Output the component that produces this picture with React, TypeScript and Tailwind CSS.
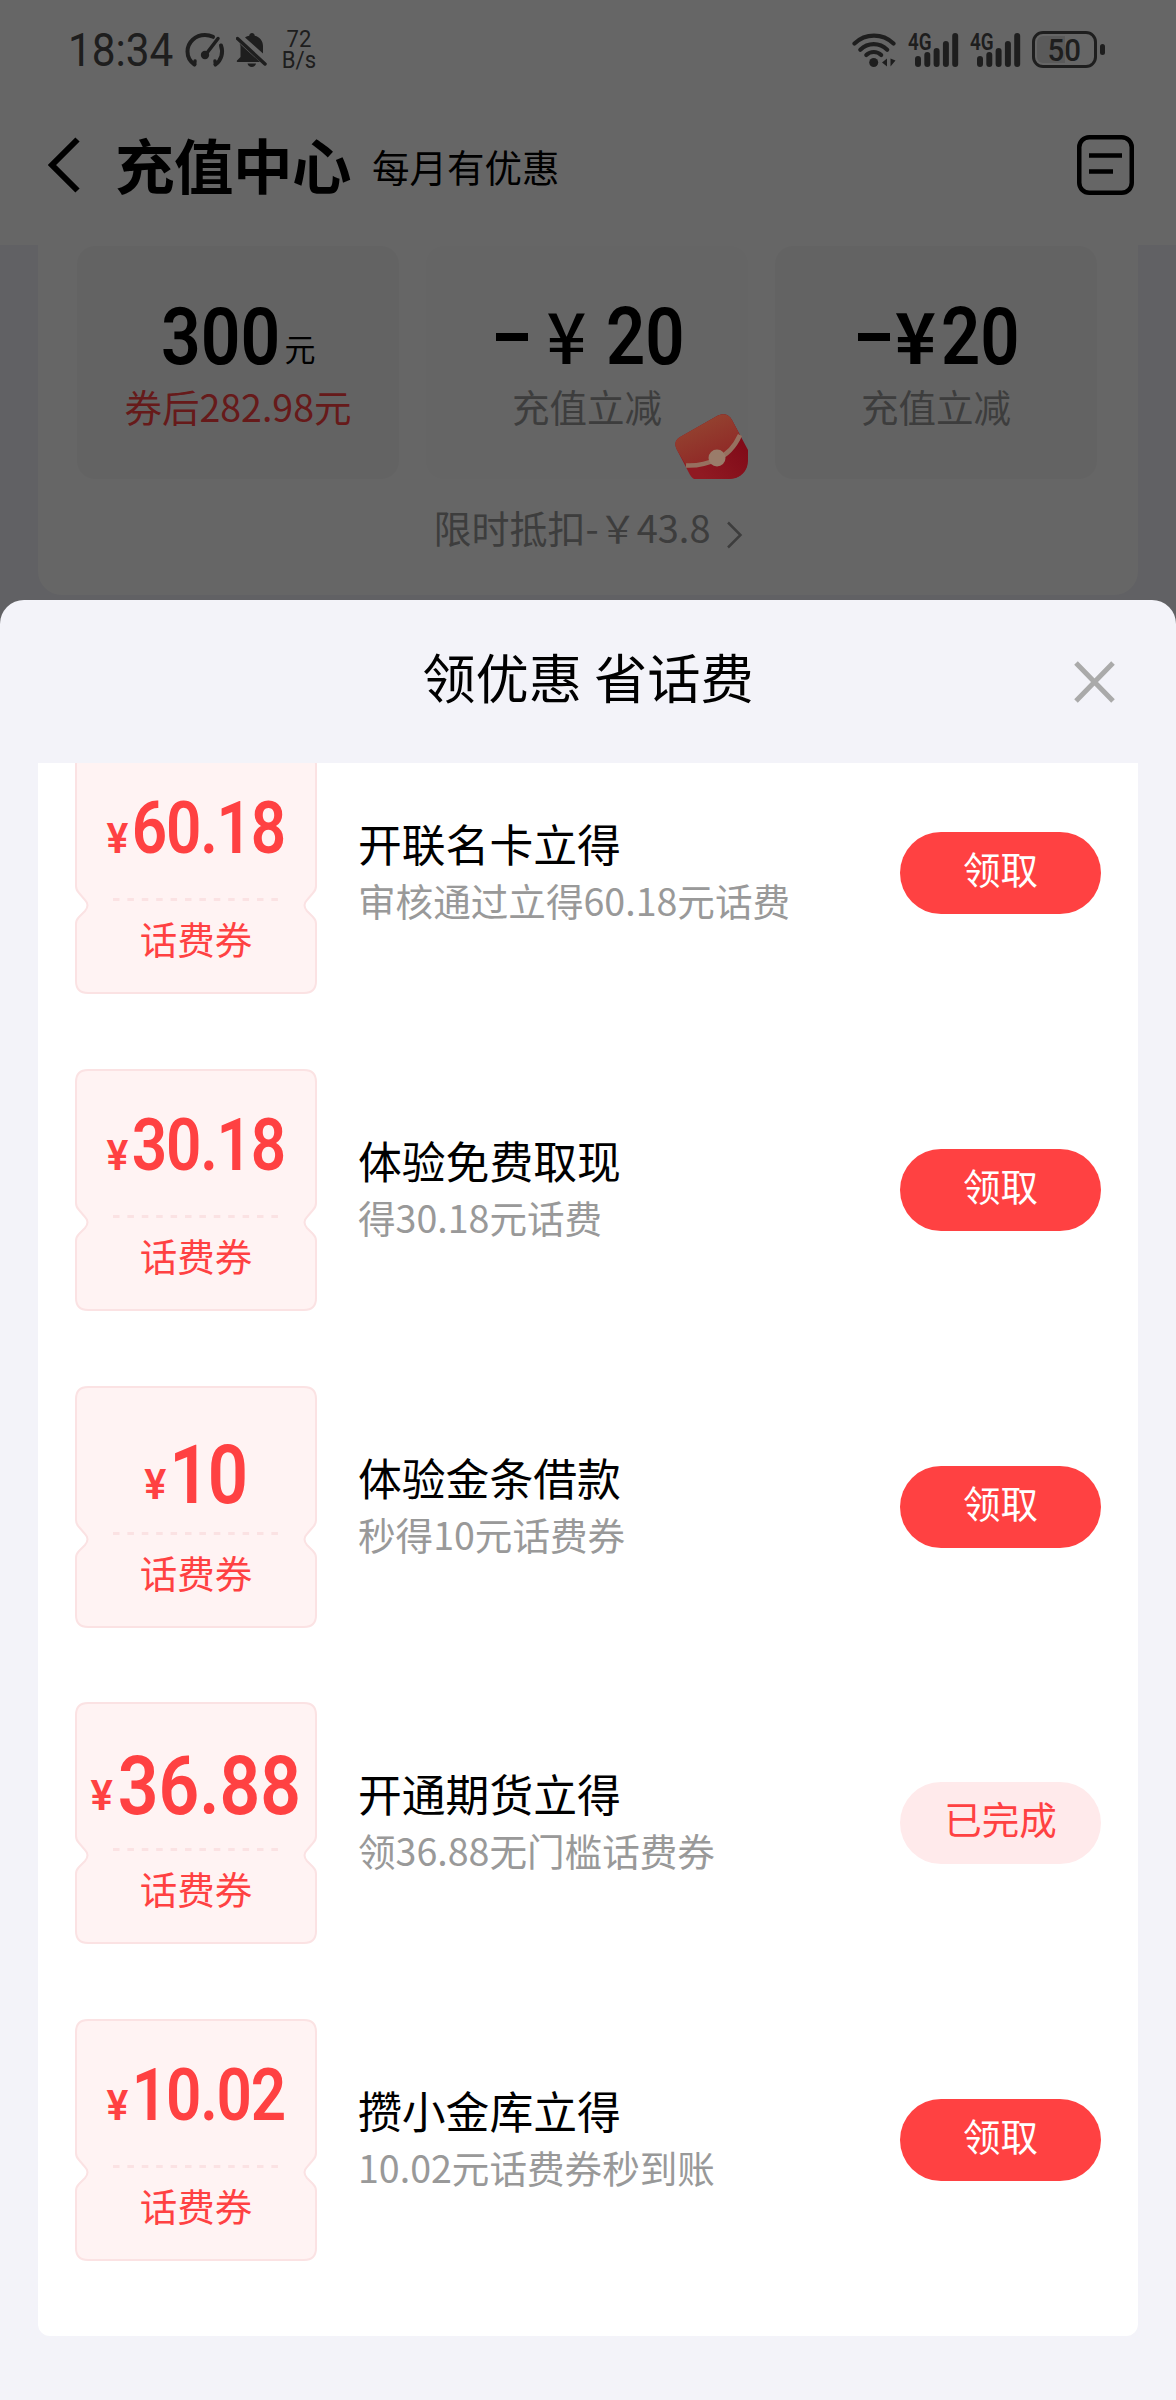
import { clsx } from 'clsx';

const coupons = [
  { amount: '60.18', size: 'md', title: '开联名卡立得', desc: '审核通过立得60.18元话费', done: false },
  { amount: '30.18', size: 'md', title: '体验免费取现', desc: '得30.18元话费', done: false },
  { amount: '10', size: 'lg', title: '体验金条借款', desc: '秒得10元话费券', done: false },
  { amount: '36.88', size: 'xl', title: '开通期货立得', desc: '领36.88无门槛话费券', done: true },
  { amount: '10.02', size: 'md', title: '攒小金库立得', desc: '10.02元话费券秒到账', done: false },
];

const amountStyles: Record<string, string> = {
  md: 'scale-x-[0.85] pt-[40px] text-[73px] leading-[73px] tracking-[-1.5px]',
  lg: 'scale-x-[0.86] pt-[48px] text-[82px] leading-[82px] tracking-[-2px]',
  xl: 'scale-x-[0.87] pt-[43px] text-[82px] leading-[82px]',
};

function SpeedIcon() {
  return (
    <svg width="40" height="36" viewBox="0 0 40 36" fill="none" stroke="currentColor" strokeLinecap="round">
      <path d="M9.5 32.5C5 29.500 2.500 24.500 2.500 19.500C2.500 10 10.500 3 20 3C23 3 25.500 3.600 28 4.800" strokeWidth="4" />
      <path d="M36 13.500C38.500 20.500 36.500 28 30.500 32.500" strokeWidth="4" />
      <path d="M9.500 32.500L10 29M30.500 32.500L30 29" strokeWidth="3.500" />
      <path d="M20 23.500L33 6.500" strokeWidth="3.500" />
      <circle cx="20" cy="23" r="4.200" fill="currentColor" stroke="none" />
    </svg>
  );
}

function BellOffIcon() {
  return (
    <svg width="31" height="34" viewBox="0 0 31 34" fill="currentColor">
      <path d="M3.500 10.500L24 29H1.500C.5 29 .5 27.500 1.500 27L4.500 24V13Z" />
      <path d="M9 4.500C10.500 3.400 12 2.900 13.200 2.700C13.500 1 14.500 0 16 0S18.500 1 18.800 2.700C24 4 27 8 27 13V20.500Z" />
      <path d="M11.500 30.500H20C19.500 32.500 18 34 15.800 34S12 32.500 11.500 30.500Z" />
      <path d="M1.500 5.500L29 31" stroke="currentColor" strokeWidth="3.500" strokeLinecap="round" />
    </svg>
  );
}

function WifiIcon() {
  return (
    <svg width="44" height="34" viewBox="0 0 44 34" fill="none" stroke="currentColor" strokeWidth="4.200" strokeLinecap="round">
      <path d="M2.500 10.500C13.500 0 30.500 0 41.500 10.500" />
      <path d="M8.300 16.700C16 9.300 27.500 9.300 35.200 16.700" />
      <path d="M14.300 22C18.500 18 25 18 29.200 22" />
      <circle cx="21.700" cy="29.500" r="4.500" fill="currentColor" stroke="none" />
      <path d="M35 25.500V33.500L30 29.500ZM38.500 25.500V33.500L43.500 27.500Z" fill="currentColor" stroke="none" />
    </svg>
  );
}

function SignalIcon() {
  return (
    <div className="relative h-[34px] w-[51px]">
      <span className="absolute top-[-2px] left-0 origin-left scale-x-[0.82] font-[Roboto] text-[23px] leading-[23px] font-semibold">
        4G
      </span>
      <svg className="absolute top-0 left-[7px]" width="44" height="34" viewBox="0 0 44 34" fill="currentColor">
        <rect x="0" y="23" width="6" height="11" rx="3" />
        <rect x="9.300" y="19" width="6" height="15" rx="3" />
        <rect x="18.600" y="15" width="6" height="19" rx="3" />
        <rect x="27.900" y="8" width="6" height="26" rx="3" />
        <rect x="37.200" y="0" width="6" height="34" rx="3" />
      </svg>
    </div>
  );
}

function RedPacket() {
  return (
    <svg className="absolute right-0 bottom-0 z-20" width="73" height="65" viewBox="0 0 73 65" fill="none">
      <defs>
        <linearGradient id="packetTop" x1="30" y1="8" x2="45" y2="42" gradientUnits="userSpaceOnUse">
          <stop stopColor="#93402f" />
          <stop offset="1" stopColor="#902a27" />
        </linearGradient>
        <linearGradient id="packetBottom" x1="30" y1="65" x2="72" y2="30" gradientUnits="userSpaceOnUse">
          <stop stopColor="#901a22" />
          <stop offset="1" stopColor="#800a18" />
        </linearGradient>
      </defs>
      <path
        d="M2 36C-1 30 0 26 5 23L42 2C48 -1 54 0 57 6L73 36V50C72 58 66 64 57 65H19C17 64 15 61 14 59Z"
        fill="url(#packetBottom)"
      />
      <path d="M2 36C-1 30 0 26 5 23L42 2C48 -1 54 0 57 6L65 21C60 33 52 41 42 45C32 50 22 52 11 51Z" fill="url(#packetTop)" />
      <path d="M11 51.500C22 52 32 50 42 45C52 41 60 32 65 21" stroke="#96705f" strokeWidth="4.500" />
      <circle cx="42" cy="44" r="8.500" fill="#9a7c6a" />
    </svg>
  );
}

function StatusBar() {
  return (
    <div className="flex h-[99px] items-center justify-between pr-[71px] pl-[68px] text-[#4d4d4d]">
      <div className="flex items-center">
        <span className="w-[117px] origin-left scale-x-[0.92] font-[Roboto] text-[46px] leading-none">18:34</span>
        <SpeedIcon />
        <span className="w-[11px]" />
        <BellOffIcon />
        <p className="ml-[13px] w-[38px] scale-x-[0.92] text-center font-[Roboto] text-[24px] leading-[21px]">
          72
          <br />
          B/s
        </p>
      </div>
      <div className="flex items-center">
        <WifiIcon />
        <span className="w-[12px]" />
        <SignalIcon />
        <span className="w-[11px]" />
        <SignalIcon />
        <div className="relative ml-[11px] flex h-[37px] w-[65px] items-center justify-center rounded-[11px] border-3 border-current">
          <span className="absolute top-[2px] bottom-[2px] left-[2px] w-[28px] rounded-l-[6px] bg-black/12" />
          <span className="relative scale-x-[0.92] font-[Roboto] text-[32px] leading-none font-medium">50</span>
        </div>
        <span className="ml-[3px] h-[11px] w-[5px] rounded-full bg-current" />
      </div>
    </div>
  );
}

function Header() {
  return (
    <header className="flex h-[131px] items-center pr-[42px] pl-[48px]">
      <svg width="32" height="56" viewBox="0 0 32 56" fill="none" stroke="black" strokeWidth="6">
        <path d="M29.500 2.500L4 28L29.500 53.500" />
      </svg>
      <h1 className="mb-[2px] ml-[35px] text-[59.500px] leading-none font-bold tracking-[-0.5px]">充值中心</h1>
      <p className="mt-[2px] ml-[21px] text-[37.500px] leading-none">每月有优惠</p>
      <svg className="ml-auto" width="57" height="60" viewBox="0 0 57 60" fill="none" stroke="black" strokeWidth="4.500">
        <rect x="2.250" y="2.250" width="52.500" height="55.500" rx="10" />
        <path d="M12 20.500H45M12 36.500H36" />
      </svg>
    </header>
  );
}

function Plans() {
  return (
    <section className="mx-[38px] h-[350px] rounded-b-[24px] bg-white px-[39px] pt-px">
      <div className="flex gap-[27px]">
        <div className="flex h-[233px] w-[322px] flex-col items-center rounded-[18px] bg-[#f8f8f8] pt-[51px]">
          <div className="flex h-[79px] items-baseline">
            <span className="w-[121px] origin-left scale-x-[0.87] font-[Roboto] text-[80px] leading-[80px] font-semibold">300</span>
            <span className="ml-[3px] -translate-y-[3px] text-[31px] leading-none">元</span>
          </div>
          <p className="text-[37.500px] leading-[60px] text-[#ff4142]">券后282.98元</p>
        </div>
        <div className="relative flex h-[233px] w-[322px] flex-col items-center overflow-hidden rounded-[18px] bg-[#fcfcfc] pt-[51px]">
          <div className="flex h-[79px] items-center">
            <span className="h-[8px] w-[32px] bg-black" />
            <span className="w-[78px] pb-[6px] text-center text-[70px] leading-[76px] font-medium">¥</span>
            <span className="w-[73px] origin-left scale-x-[0.86] font-[Roboto] text-[80px] leading-[80px] font-semibold">20</span>
          </div>
          <p className="text-[37.500px] leading-[60px] text-[#999]">充值立减</p>
          <RedPacket />
        </div>
        <div className="flex h-[233px] w-[322px] flex-col items-center rounded-[18px] bg-[#f8f8f8] pt-[51px]">
          <div className="flex h-[79px] items-center">
            <span className="h-[8px] w-[32px] bg-black" />
            <span className="w-[51px] pb-[6px] text-center text-[70px] leading-[76px] font-bold">¥</span>
            <span className="w-[73px] origin-left scale-x-[0.86] font-[Roboto] text-[80px] leading-[80px] font-semibold">20</span>
          </div>
          <p className="text-[37.500px] leading-[60px] text-[#999]">充值立减</p>
        </div>
      </div>
      <div className="mt-[18px] flex items-center justify-center text-[38px] leading-[60px] text-[#999]">
        <span>限时抵扣-￥43.8</span>
        <svg className="mt-[16px] ml-[15px]" width="17" height="28" viewBox="0 0 17 28" fill="none" stroke="currentColor" strokeWidth="2.500">
          <path d="M2 1.500L14.500 14L2 26.500" />
        </svg>
      </div>
    </section>
  );
}

function Ticket({ amount, size }: { amount: string; size: string }) {
  return (
    <div className="relative h-[242px] w-[242px] shrink-0 text-[#ff4142]">
      <svg className="absolute inset-0" width="242" height="242" viewBox="0 0 242 242" fill="none">
        <path
          d="M13 1H229Q241 1 241 13V134Q241 138 238 141L232 148Q227 153 232 159L238 165Q241 168 241 172V229Q241 241 229 241H13Q1 241 1 229V172Q1 168 4 165L10 159Q15 153 10 148L4 141Q1 138 1 134V13Q1 1 13 1Z"
          fill="#fff3f3"
          stroke="#fbe2e3"
          strokeWidth="2"
        />
        <path d="M38 147.500H204" stroke="#fbe2e3" strokeWidth="3" strokeDasharray="6.500 7.900" />
      </svg>
      <div className="relative flex h-full flex-col items-center">
        <div className={clsx('flex h-[149px] items-baseline font-[Roboto] font-semibold', amountStyles[size])}>
          <span className={clsx('mr-[7px] scale-x-[1.120] text-[43px]', size !== 'md' && '-translate-y-[4px]')}>¥</span>
          <span>{amount}</span>
        </div>
        <p className="text-[37.500px] leading-[74px]">话费券</p>
      </div>
    </div>
  );
}

function CouponSheet() {
  return (
    <section className="relative z-30 flex flex-1 flex-col rounded-t-[24px] bg-[#f3f3f9]">
      <div className="relative flex h-[163px] items-center justify-center">
        <h2 className="mb-[11px] text-[53.300px] leading-none">领优惠 省话费</h2>
        <svg className="absolute top-[61px] right-[61px]" width="41" height="42" viewBox="0 0 41 42" stroke="#aaa" strokeWidth="5">
          <path d="M2 2L39 40M39 2L2 40" />
        </svg>
      </div>
      <div className="mx-[38px] h-[1573px] overflow-hidden rounded-b-[12px] bg-white">
        <ul className="mt-[-11px] flex flex-col gap-[74.800px] px-[37px]">
          {coupons.map((coupon) => (
            <li key={coupon.title} className="flex h-[242px]">
              <Ticket amount={coupon.amount} size={coupon.size} />
              <div className="ml-[41px] flex-1 pt-[63px]">
                <h3 className="text-[43.800px] leading-[56px] text-black">{coupon.title}</h3>
                <p className="mt-[1px] text-[37.600px] leading-[56px] text-[#999]">{coupon.desc}</p>
              </div>
              <button
                className={clsx(
                  'mt-[80px] h-[82px] w-[201px] rounded-full pb-[10px] text-[37.500px] leading-[72px]',
                  coupon.done ? 'bg-[#ffeaeb] text-[#ff4142]' : 'bg-[#ff4142] text-white',
                )}
              >
                {coupon.done ? '已完成' : '领取'}
              </button>
            </li>
          ))}
        </ul>
      </div>
    </section>
  );
}

export default function App() {
  return (
    <div className="relative flex h-[2400px] w-[1176px] flex-col overflow-hidden bg-[#f3f3f9] font-['Noto_Sans_CJK_SC',sans-serif] text-black">
      <div className="h-[245px] bg-white">
        <StatusBar />
        <Header />
      </div>
      <div className="h-[355px]">
        <Plans />
      </div>
      <div className="absolute inset-0 z-10 bg-black/60" />
      <CouponSheet />
    </div>
  );
}
